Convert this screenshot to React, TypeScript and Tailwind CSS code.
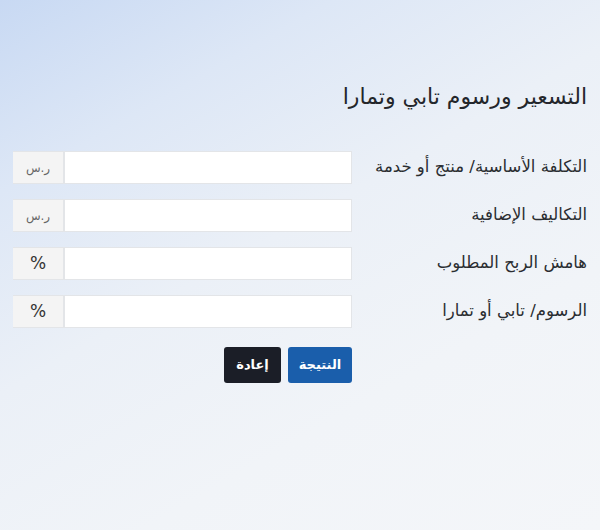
import { useState } from 'react';

const fields = [
    { label: 'التكلفة الأساسية/ منتج أو خدمة', addon: 'ر.س', small: true },
    { label: 'التكاليف الإضافية', addon: 'ر.س', small: true },
    { label: 'هامش الربح المطلوب', addon: '%', small: false },
    { label: 'الرسوم/ تابي أو تمارا', addon: '%', small: false },
];

export default function App() {
    const [values, setValues] = useState<string[]>(['', '', '', '']);

    return (
        <div
            dir="rtl"
            className="h-[530px] w-[600px] overflow-hidden bg-[linear-gradient(150deg,#c8d9f3_0%,#dde7f6_22%,#ebf0f7_45%,#f1f4f8_70%,#f4f6f9_100%)] px-[13px] pt-[82px] font-['DejaVu_Sans',sans-serif] text-[#1f2328]"
        >
            <h1 className="text-[22px] leading-[30px] text-[#23262b]">التسعير ورسوم تابي وتمارا</h1>

            <div className="mt-[39px] grid grid-cols-[1fr_339px] gap-y-[15px]">
                {fields.map((f, i) => (
                    <div key={f.label} className="contents">
                        <label className="flex h-[33px] items-center text-[16.5px] text-[#2a2d31]">{f.label}</label>
                        <div className="flex h-[33px] w-[339px]">
                            <input
                                value={values[i]}
                                onChange={(e) => setValues(values.map((v, j) => (j === i ? e.target.value : v)))}
                                className="h-full w-[288px] border border-[#e3e5e8] bg-white px-2 outline-none"
                            />
                            <span
                                className={
                                    f.small
                                        ? 'flex h-full w-[51px] items-center justify-center border border-l-0 border-[#e3e5e8] bg-[#f4f4f4] text-[12px] text-[#666]'
                                        : 'flex h-full w-[51px] items-center justify-center border border-l-0 border-[#e3e5e8] bg-[#f4f4f4] text-[17px] text-[#333]'
                                }
                            >
                                {f.addon}
                            </span>
                        </div>
                    </div>
                ))}
                <div />
                <div className="mt-[4px] flex gap-[7px]">
                    <button
                        type="button"
                        className="h-[36px] w-[64px] rounded-[3px] bg-[#1a5eab] text-[13px] font-bold text-white"
                    >
                        النتيجة
                    </button>
                    <button
                        type="button"
                        onClick={() => setValues(['', '', '', ''])}
                        className="h-[36px] w-[57px] rounded-[3px] bg-[#1b1e27] text-[13px] font-bold text-white"
                    >
                        إعادة
                    </button>
                </div>
            </div>
        </div>
    );
}
